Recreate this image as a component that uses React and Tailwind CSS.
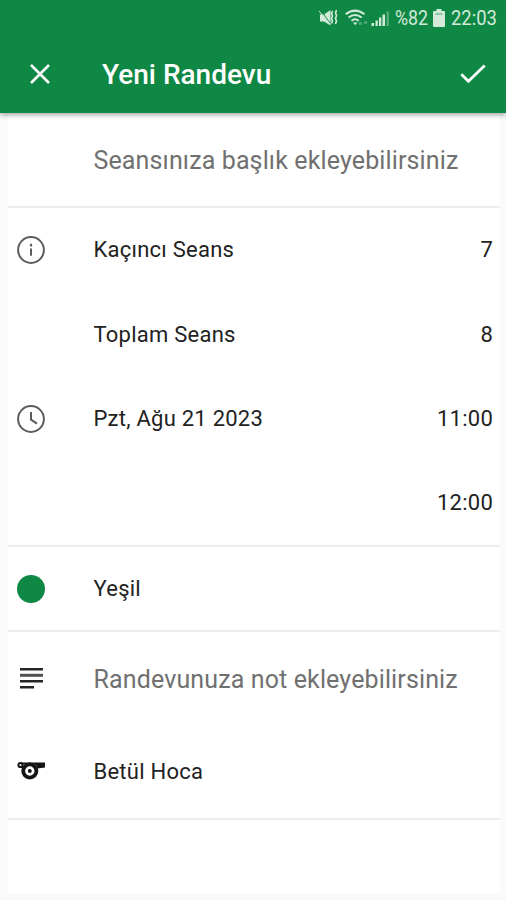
import React from 'react';

function Close() {
  return (
    <svg className="h-7 w-7" viewBox="0 0 28 28" stroke="#fff" strokeWidth="2.5" fill="none">
      <path d="M5 4L23 22M23 4L5 22" />
    </svg>
  );
}

function Check() {
  return (
    <svg className="h-7 w-7" viewBox="0 0 28 28" stroke="#fff" strokeWidth="2.7" fill="none">
      <path d="M2.3 13.3L9.4 20.3L25.7 4.5" />
    </svg>
  );
}

function Info() {
  return (
    <svg className="h-7 w-7" viewBox="0 0 28 28" stroke="#5c5c5c" strokeWidth="2" fill="none">
      <circle cx="14" cy="14" r="12.9" />
      <path d="M14 12.5v7.2" />
      <path d="M14 7.8v2.6" strokeWidth="2.2" />
    </svg>
  );
}

function Clock() {
  return (
    <svg className="h-7 w-7" viewBox="0 0 28 28" stroke="#5c5c5c" strokeWidth="2" fill="none">
      <circle cx="14" cy="14" r="12.9" />
      <path d="M14 7v7.6l6 4" />
    </svg>
  );
}

function Notes() {
  return (
    <svg className="h-7 w-7" viewBox="0 0 28 28" fill="#262626">
      <path d="M3 3h23v2.4H3zM3 15h23v2.4H3zM3 21h14v2.4H3z" />
      <path d="M3 8.800h23v3H3z" opacity=".8" />
    </svg>
  );
}

function Whistle() {
  return (
    <svg className="h-7 w-7" viewBox="0 0 28 28" fill="none" stroke="#151515">
      <path d="M11 5.500H28V10.500L20.500 11.500L19 8z" fill="#151515" stroke="none" />
      <circle cx="12.800" cy="14" r="6.600" strokeWidth="3.800" />
      <circle cx="12.800" cy="14" r="2" fill="#151515" stroke="none" />
      <circle cx="3.500" cy="8" r="2.100" strokeWidth="2" />
      <path d="M4 6.500h8M5 9.500l3 2" strokeWidth="2" />
    </svg>
  );
}

function StatusBar() {
  return (
    <div className="flex h-9 items-center justify-end pr-[9px] text-[#d3ead9]">
      <svg className="mr-[7px] h-[18px] w-[19px]" viewBox="0 0 19 18" fill="currentColor">
        <path d="M1 5.500h4l6.500-4.500v15.500L5 12.500H1z" />
        <path d="M1.500 1l9.500 13" stroke="#0f8845" strokeWidth="1" />
        <path d="M0 2l10 12" stroke="currentColor" strokeWidth="1" />
        <path d="M13.500 2l-1 2.500 1 2.500-1 2.500 1 2.500-1 2.500M17.500 1l-1 3 1 2.500-1 3 1 2.500-1 3" fill="none" stroke="currentColor" strokeWidth="1.600" />
      </svg>
      <svg className="mr-[3px] h-[18px] w-[23px]" viewBox="0 0 23 18" fill="none" stroke="currentColor" strokeWidth="2">
        <path d="M.7 5.200Q10 -2 19.500 5.200M3.500 8.500Q10 3.500 16.700 8.500M6.500 11.700Q10 8.700 13.700 11.700" />
        <path d="M8 13.500h4.500l-2.300 2.800z" fill="currentColor" stroke="none" />
        <path d="M14 14.500h3M19 13.500h3" strokeWidth="2.500" opacity=".35" />
      </svg>
      <svg className="mr-[6px] h-[17px] w-[18px]" viewBox="0 0 18 17" fill="currentColor">
        <path d="M.5 13H3v3H.5zM4.500 10.500h2.300V16H4.500zM8 7.500h2.300V16H8zM11.500 4.500H14V16h-2.500z" />
        <path d="M15.500 1.500H18V16h-2.500z" opacity=".35" />
      </svg>
      <span className="w-[33px] origin-left scale-x-[0.89] whitespace-nowrap text-[20px] leading-9">%82</span>
      <svg className="mr-[6px] ml-[5px] h-[18px] w-[12px]" viewBox="0 0 12 18" fill="currentColor">
        <path d="M3.500 0h5v2H11a1 1 0 0 1 1 1v14a1 1 0 0 1-1 1H1a1 1 0 0 1-1-1V3a1 1 0 0 1 1-1h2.500z" />
        <path d="M2.500 4h7v2h-7z" fill="#0f8845" opacity=".35" />
      </svg>
      <span className="w-[46px] origin-left scale-x-[0.92] whitespace-nowrap text-[20px] leading-9">22:03</span>
    </div>
  );
}

function Row({ icon, label, value, height = 'h-[84px]', muted = false }) {
  return (
    <div className={`flex items-center pr-[7px] pl-[9px] ${height}`}>
      <div className="flex h-7 w-[76.5px] shrink-0 items-center">{icon}</div>
      <span className={muted ? 'pt-[2px] text-[25px] tracking-[0.13px] text-[#707070]' : 'text-[22px] tracking-[0.24px] text-[#222]'}>{label}</span>
      <span className="ml-auto text-[22px] tracking-[0.24px] text-[#222]">{value}</span>
    </div>
  );
}

function Divider() {
  return <div className="h-[2px] bg-[#ededed]" />;
}

export default function App() {
  return (
    <div className="flex h-[900px] w-[506px] flex-col overflow-hidden bg-[#fafafa] font-['Roboto',sans-serif]">
      <header className="z-10 h-[113px] shrink-0 bg-[#0f8845] shadow-[0_2px_5px_rgba(0,0,0,0.35)]">
        <StatusBar />
        <div className="flex h-[78px] items-center pr-[19px] pl-[26px]">
          <Close />
          <h1 className="ml-[48px] text-[28px] font-medium text-white">Yeni Randevu</h1>
          <div className="ml-auto"><Check /></div>
        </div>
      </header>
      <main className="mr-[6px] ml-2 h-[780px] shrink-0 bg-white">
        <Row muted height="h-[93px]" label="Seansınıza başlık ekleyebilirsiniz" />
        <Divider />
        <Row icon={<Info />} label="Kaçıncı Seans" value="7" height="h-[83px]" />
        <Row label="Toplam Seans" value="8" height="h-[86px]" />
        <Row icon={<Clock />} label="Pzt, Ağu 21 2023" value="11:00" height="h-[83px]" />
        <Row value="12:00" height="h-[85px]" />
        <Divider />
        <Row icon={<div className="h-7 w-7 rounded-full bg-[#0f8845]" />} label="Yeşil" height="h-[83px]" />
        <Divider />
        <Row muted icon={<Notes />} label="Randevunuza not ekleyebilirsiniz" height="h-[94px]" />
        <Row icon={<Whistle />} label="Betül Hoca" height="h-[90px]" />
        <div className="h-[2px]" />
        <Divider />
      </main>
    </div>
  );
}
